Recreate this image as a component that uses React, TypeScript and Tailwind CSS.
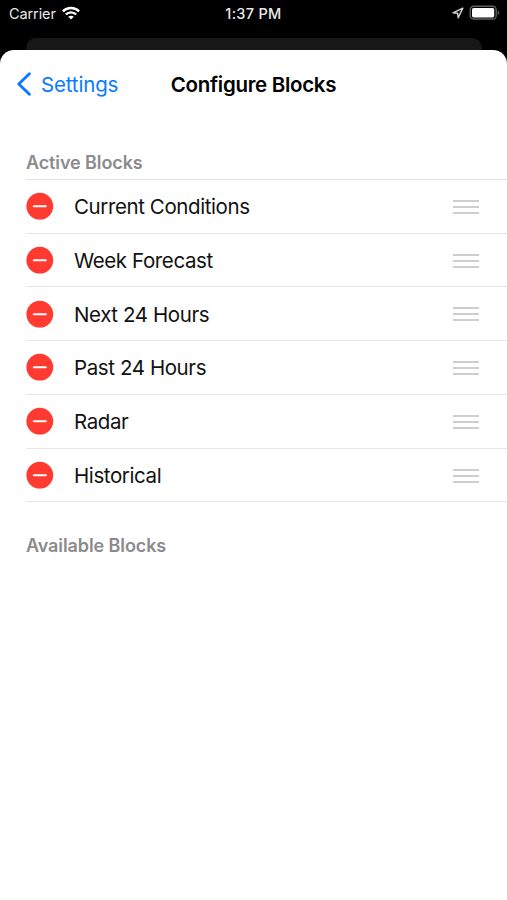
import * as React from 'react'

const ACTIVE_BLOCKS = [
    { id: 'current', title: 'Current Conditions' },
    { id: 'week', title: 'Week Forecast' },
    { id: 'next', title: 'Next 24 Hours' },
    { id: 'past', title: 'Past 24 Hours' },
    { id: 'radar', title: 'Radar' },
    { id: 'historical', title: 'Historical' },
]

function WifiIcon() {
    return (
        <svg width="18" height="14" viewBox="0 0 18 14" fill="none" stroke="#fff" strokeWidth="2.4">
            <path d="M0.9 5.3C5.4 0.8 12.6 0.8 17.1 5.3" />
            <path d="M3.8 8.5C6.7 5.6 11.3 5.6 14.2 8.5" />
            <path d="M9 13.6L6.2 10.8C7.8 9.3 10.2 9.3 11.8 10.8Z" fill="#fff" stroke="none" />
        </svg>
    )
}

function LocationIcon() {
    return (
        <svg width="12" height="12" viewBox="0 0 12 12" fill="none" stroke="#d4d4d4" strokeWidth="1.4" strokeLinejoin="round">
            <path d="M10.8 1.1L1 5.8L5.7 6.3L6.2 10.8Z" />
        </svg>
    )
}

function BatteryIcon() {
    return (
        <svg width="31" height="15" viewBox="0 0 31 15" fill="none">
            <rect x="1.2" y="1.2" width="26" height="12.8" rx="3.6" stroke="#606063" strokeWidth="1.4" />
            <rect x="3" y="3" width="22.2" height="9.4" rx="1.6" fill="#fff" />
            <path d="M28.6 5.4C30.8 6.2 30.8 9 28.6 9.8Z" fill="#606063" />
        </svg>
    )
}

function StatusBar() {
    return (
        <div className="grid h-[38px] grid-cols-3 items-start text-[#e8e8e8]">
            <div className="flex items-center pl-[9px] pt-[4px]">
                <span className="text-[14.5px] leading-5 tracking-[-0.1px]">Carrier</span>
                <span className="mb-[2px] ml-[6px]">
                    <WifiIcon />
                </span>
            </div>
            <div className="pt-[4px] text-center text-[14.5px] font-medium leading-5 tracking-[0.3px]">1:37 PM</div>
            <div className="flex items-center justify-end gap-[5px] pr-[7px] pt-[5px]">
                <LocationIcon />
                <BatteryIcon />
            </div>
        </div>
    )
}

function NavBar() {
    return (
        <header className="grid h-[68px] grid-cols-[1fr_auto_1fr] items-center">
            <button className="flex items-center pl-[17px] text-[#087aff]">
                <svg width="14" height="24" viewBox="0 0 14 24" fill="none" stroke="currentColor" strokeWidth="2.8" strokeLinecap="round" strokeLinejoin="round">
                    <path d="M12.4 1.8L1.8 12L12.4 22.2" />
                </svg>
                <span className="ml-[10px] pt-px text-[20.5px] leading-6 tracking-[-0.15px]">Settings</span>
            </button>
            <h1 className="pt-px text-[20.5px] font-semibold leading-6 tracking-[-0.3px] text-black">Configure Blocks</h1>
        </header>
    )
}

function BlockRow({ title }: { title: string }) {
    return (
        <li className="flex h-[53.75px] items-center border-b border-[#e7e7e9] pr-[28px]">
            <button aria-label={`Remove ${title}`} className="shrink-0">
                <svg width="28" height="28" viewBox="0 0 28 28">
                    <circle cx="13.8" cy="14.2" r="13.4" fill="#ff3a30" />
                    <path d="M7.8 14.2H19.8" stroke="#fff" strokeWidth="2" strokeLinecap="round" />
                </svg>
            </button>
            <span className="ml-[20px] flex-1 pt-[2px] text-[20.5px] leading-6 tracking-[-0.4px] text-[#111]">{title}</span>
            <div className="flex w-[26px] flex-col gap-[4px] pt-[1.5px]">
                <div className="h-[2px] bg-[#cecece]" />
                <div className="h-[2px] bg-[#cecece]" />
                <div className="h-[2px] bg-[#cecece]" />
            </div>
        </li>
    )
}

function SectionTitle({ children }: { children: React.ReactNode }) {
    return <h2 className="pt-px text-[18px] font-semibold leading-6 tracking-[-0.1px] text-[#8b8b8d]">{children}</h2>
}

export default function App() {
    return (
        <div className="flex h-[900px] w-[507px] flex-col overflow-hidden bg-black font-['Inter',sans-serif]">
            <StatusBar />

            {/* Top edge of the sheet underneath */}
            <div className="ml-[26px] mr-[25px] h-[12px] shrink-0 rounded-t-[10px] bg-[#171717]" />

            <main className="flex-1 rounded-t-[14px] bg-white">
                <NavBar />
                <div className="pl-[26px] pt-[32px]">
                    <SectionTitle>Active Blocks</SectionTitle>
                    <ul className="mt-[3.75px] border-t border-[#e2e2e4]">
                        {ACTIVE_BLOCKS.map((block) => (
                            <BlockRow key={block.id} title={block.title} />
                        ))}
                    </ul>
                    <div className="mt-[31px]">
                        <SectionTitle>Available Blocks</SectionTitle>
                    </div>
                </div>
            </main>
        </div>
    )
}
